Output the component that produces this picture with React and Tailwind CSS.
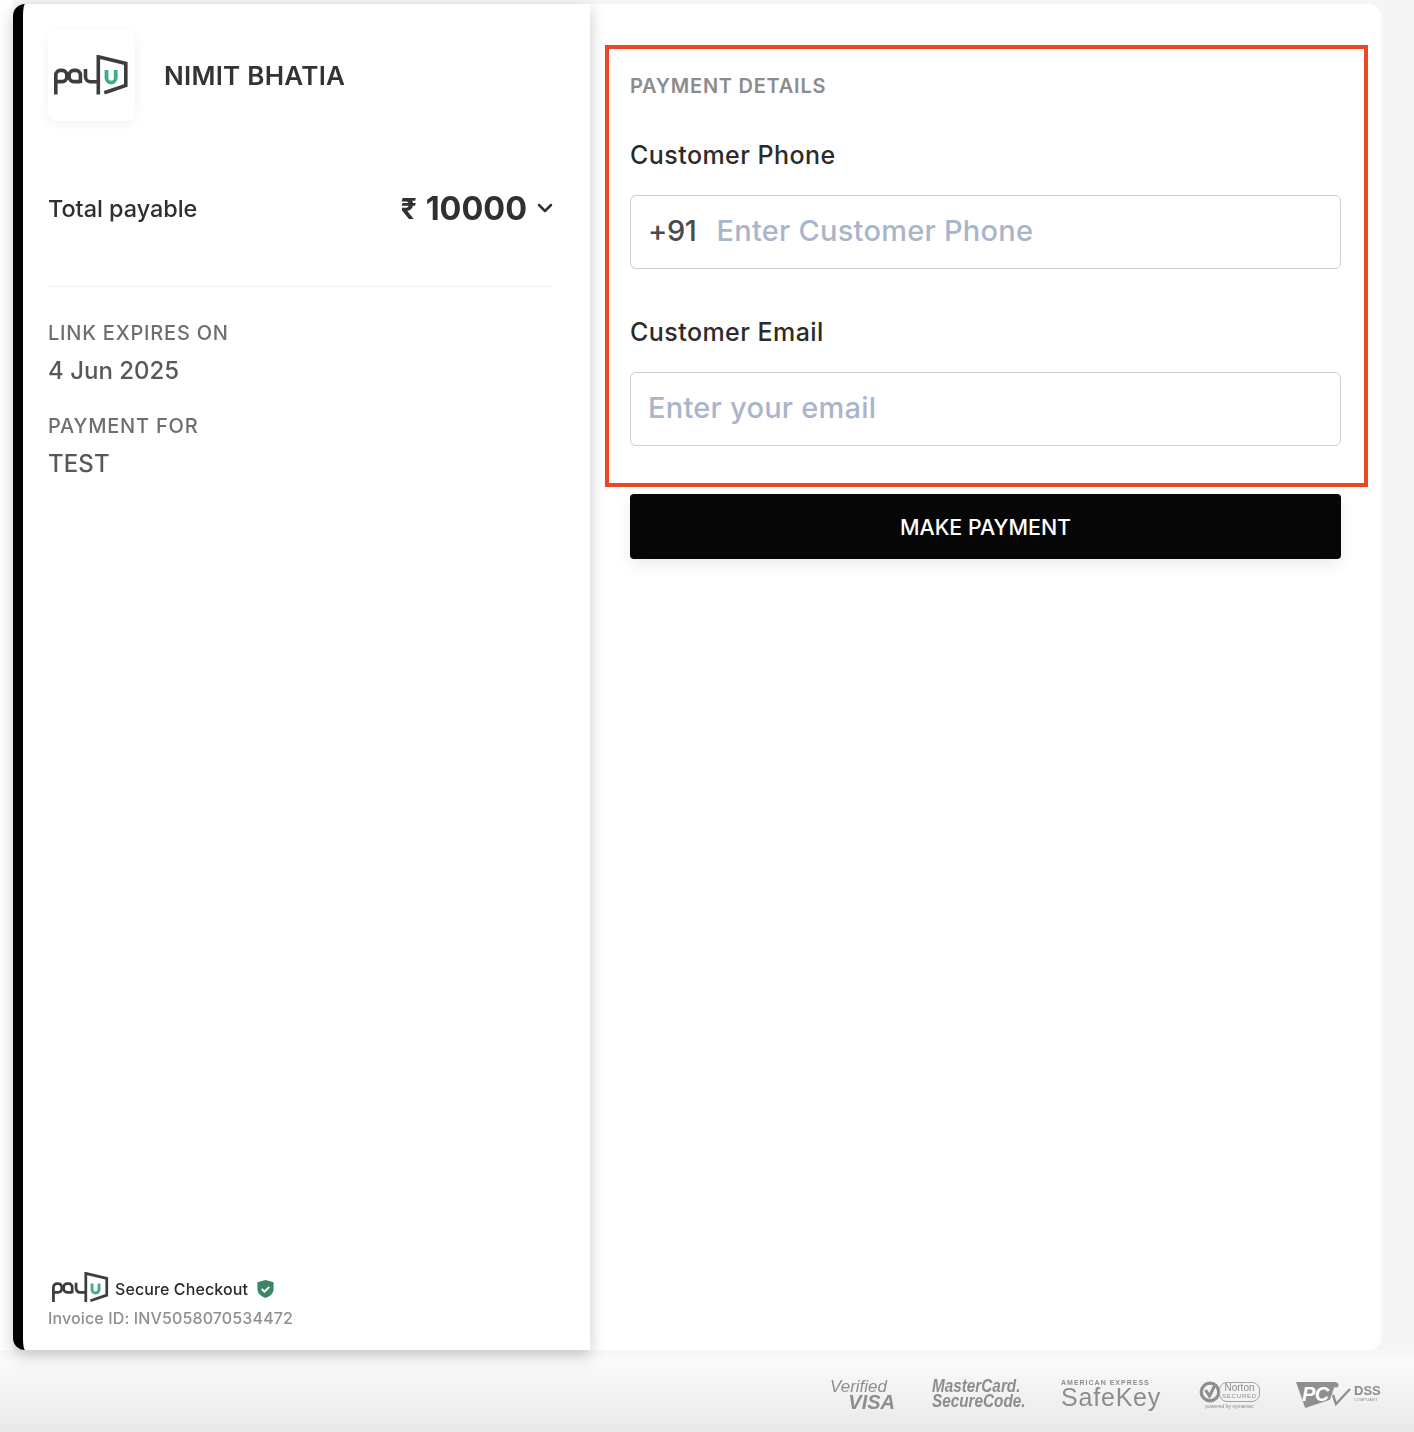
import React from 'react';
import { ChevronDown } from 'lucide-react';

const PayuLogo = ({ className }) => (
  <svg viewBox="0 0 76 42" fill="none" className={className}>
    <g stroke="#3d3d3d" strokeWidth="3.600">
      <path d="M1.800 39.500V20a4.600 4.600 0 0 1 4.600-4.600h1.800a4.600 4.600 0 0 1 4.600 4.600v2a4.600 4.600 0 0 1-4.600 4.600H1.800" />
      <path d="M26.400 28V20a4.600 4.600 0 0 0-4.600-4.600h-2a4.600 4.600 0 0 0-4.600 4.600v2a4.600 4.600 0 0 0 4.600 4.600h6.600" />
      <path d="M31.500 14v7.700a5 5 0 0 0 5 5h8" />
      <path d="M44.300 39.500V1.800l27.500 6.600v22l-21.500 7.400" />
    </g>
    <path d="M52.500 15v8a4.600 4.600 0 0 0 9.200 0v-8" stroke="#3fae82" strokeWidth="3.800" />
  </svg>
);

const ShieldIcon = () => (
  <svg viewBox="0 0 20 20" className="w-[19px] h-[20px]">
    <path d="M10 .5 18.500 3v7c0 4.500-3.500 7.800-8.500 9.500C5 17.800 1.500 14.500 1.500 10V3z" fill="#3b8569" />
    <path d="m6 10 3 2.800 5-5" fill="none" stroke="#fff" strokeWidth="2" />
  </svg>
);

const Field = ({ label, prefix, placeholder }) => (
  <div>
    <div className="text-[25px] leading-[30px] font-medium text-[#2b2b2b] tracking-[0.45px]">{label}</div>
    <div className="mt-[25px] h-[74px] rounded-[6px] border border-[#cfcfcf] bg-white flex items-center px-[17px] pb-[2px] text-[29px]">
      {prefix && <span className="text-[#4a4a4a] font-medium tracking-[-0.4px] mr-[20px]">{prefix}</span>}
      <span className="text-[#a9b5cb] font-medium tracking-[0.25px]">{placeholder}</span>
    </div>
  </div>
);

const BadgeRow = () => (
  <div className="flex items-start justify-end h-[82px] pr-[33px] pt-[29px] blur-[0.3px] text-[#8d8d8d] font-['Liberation_Sans',sans-serif]">
    <div className="w-[65px] italic mr-[37px]">
      <div className="text-[17px] leading-[15px]">Verified</div>
      <div className="font-bold text-[20px] leading-[17px] text-right">VISA</div>
    </div>
    <div className="w-[90px] italic font-bold text-[18px] leading-[15px] mr-[39px] origin-left scale-x-[0.85] whitespace-nowrap">
      <div>MasterCard.</div>
      <div>SecureCode.</div>
    </div>
    <div className="w-[101px] mr-[37px] whitespace-nowrap">
      <div className="font-bold text-[7px] leading-[7px] tracking-[1px]">AMERICAN EXPRESS</div>
      <div className="text-[25px] leading-[23px] tracking-[0.8px]">SafeKey</div>
    </div>
    <div className="w-[61px] mr-[36px] mt-[2px]">
      <div className="flex items-center">
        <svg viewBox="0 0 22 22" className="w-[22px] h-[22px] shrink-0">
          <circle cx="11" cy="11" r="8.800" fill="none" stroke="#8d8d8d" strokeWidth="3.200" />
          <path d="m6.500 9 4 6 6-12" fill="none" stroke="#8d8d8d" strokeWidth="3" />
        </svg>
        <div className="w-[41px] h-[20px] ml-[-2px] border border-[#a5a5a5] rounded-[8px] text-center">
          <div className="text-[10px] leading-[10px]">Norton</div>
          <div className="text-[6px] leading-[7px] tracking-[0.8px]">SECURED</div>
        </div>
      </div>
      <div className="text-[5px] leading-[6px] text-center whitespace-nowrap">powered by symantec</div>
    </div>
    <div className="w-[85px] flex items-start mt-[3px]">
      <div className="w-[40px] h-[26px] shrink-0 bg-[#8f8f8f] [clip-path:polygon(0_0,100%_0,85%_68%,23%_100%)] text-white font-bold italic text-[20px] leading-[24px] pl-[6px] tracking-[-0.5px]">
        PC
      </div>
      <svg viewBox="0 0 22 26" className="w-[22px] h-[26px] ml-[-6px] shrink-0">
        <circle cx="6" cy="3" r="2.500" fill="#8f8f8f" />
        <path d="m3 13 3 9 14-15" fill="none" stroke="#8f8f8f" strokeWidth="2.400" />
      </svg>
      <div className="ml-[2px] mt-[3px] font-bold text-[13px] leading-[12px]">
        DSS
        <div className="font-normal text-[4px] leading-[5px]">COMPLIANT</div>
      </div>
    </div>
  </div>
);

export default function App() {
  return (
    <div className="w-[1414px] h-[1432px] overflow-hidden font-['Inter',sans-serif] [background:linear-gradient(#ffffff,#ffffff)_0_0/13px_1350px_no-repeat,linear-gradient(180deg,#f5f5f5_0%,#f5f5f5_94%,#fafafa_95%,#e9e9e9_100%)]">
      <div className="h-[4px]" />
      <div className="flex w-[1368px] h-[1346px] ml-[13px]">
        {/* Left summary panel */}
        <div className="relative z-10 w-[577px] shrink-0 flex flex-col bg-white border-l-[10px] border-black rounded-l-[12px] shadow-[0_5px_16px_rgba(0,0,0,0.22)] pl-[25px] pr-[37px]">
          <div className="flex items-center mt-[26px]">
            <div className="w-[87px] h-[91px] rounded-[8px] bg-white shadow-[0_2px_12px_rgba(0,0,0,0.06)] flex items-center justify-center">
              <PayuLogo className="w-[76px] h-[42px]" />
            </div>
            <div className="ml-[29px] text-[26px] font-semibold text-[#333333] tracking-[0.25px] mb-[1px]">NIMIT BHATIA</div>
          </div>

          <div className="flex items-center justify-between mt-[64px] pb-[53px] border-b border-[#f0f0f0]">
            <span className="text-[23.400px] leading-[48px] font-medium text-[#2f2f2f]">Total payable</span>
            <div className="flex items-center text-[#303030] font-bold">
              <span className="text-[28px]">₹</span>
              <span className="text-[32.400px] leading-[48px] ml-[9px]">10000</span>
              <ChevronDown size={24} strokeWidth={2.5} className="ml-[6px] mr-[-4px] mb-[2px]" />
            </div>
          </div>

          <div className="mt-[33px] text-[20px] leading-[26px] font-medium text-[#6e6e6e] tracking-[0.78px]">LINK EXPIRES ON</div>
          <div className="mt-[10px] text-[24px] leading-[30px] font-medium text-[#585858]">4 Jun 2025</div>
          <div className="mt-[27px] text-[20px] leading-[26px] font-medium text-[#6e6e6e] tracking-[0.78px]">PAYMENT FOR</div>
          <div className="mt-[10px] text-[24px] leading-[30px] font-medium text-[#585858] tracking-[0.1px]">TEST</div>

          <div className="mt-auto mb-[20px]">
            <div className="flex items-center ml-[4px]">
              <PayuLogo className="w-[58px] h-[32px]" />
              <span className="ml-[5px] mt-[1px] text-[16px] font-medium text-[#2a2a2a] tracking-[0.1px]">Secure Checkout</span>
              <div className="ml-[8px] mt-[1px]"><ShieldIcon /></div>
            </div>
            <div className="mt-[2px] text-[16px] leading-[24px] font-medium text-[#8f8f8f] tracking-[0.13px]">Invoice ID: INV5058070534472</div>
          </div>
        </div>

        {/* Right form panel */}
        <div className="flex-1 bg-white rounded-r-[12px] pt-[41px] pl-[15px]">
          <div className="w-[763px] h-[442px] border-[4px] border-[#ee4527] pl-[21px] pr-[23px] pt-[24px]">
            <div className="text-[20px] leading-[26px] font-semibold text-[#8c8c8c] tracking-[0.75px]">PAYMENT DETAILS</div>
            <div className="mt-[41px]">
              <Field label="Customer Phone" prefix="+91" placeholder="Enter Customer Phone" />
            </div>
            <div className="mt-[48px]">
              <Field label="Customer Email" placeholder="Enter your email" />
            </div>
          </div>
          <button className="mt-[7px] ml-[25px] w-[711px] h-[65px] rounded-[4px] bg-[#060606] text-white text-[21.400px] font-medium pt-[1px] shadow-[0_6px_16px_rgba(0,0,0,0.08)]">
            MAKE PAYMENT
          </button>
        </div>
      </div>
      <BadgeRow />
    </div>
  );
}
